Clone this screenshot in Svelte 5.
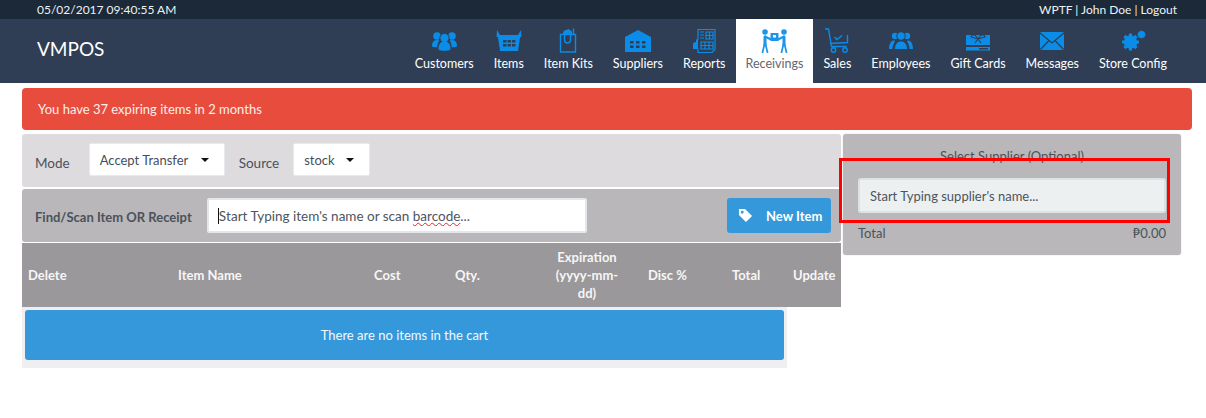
<script>
  const ICONS = {
    customers: `<circle cx="7" cy="9" r="3.8"/><circle cx="22" cy="9" r="3.8"/><path d="M2 19c0-4 2-6 5-6 1 0 2 .3 2.6.8-1.600 1.500-2.300 3.500-2.300 6.400C4.500 20.500 2 20 2 19zM27 19c0-4-2-6-5-6-1 0-2 .3-2.600.8 1.600 1.500 2.300 3.500 2.300 6.400 2.800.3 5.300-.2 5.300-1.200z"/><circle cx="14.500" cy="11" r="4.600" stroke="#2f3e54"/><path d="M8.500 22c0-5 2-7.500 6-7.500s6 2.500 6 7.500c0 2.500-12 2.500-12 0z"/>`,
    items: `<path fill-rule="evenodd" d="M2 3l3 5h18l3-5 .5 6.500-1.500 1L23 24H5L3 10.500 1.500 9.500zM8 13v2.500h3.500V13zM12.500 13v2.500H16V13zM17 13v2.500h3.500V13zM8 17v2.500h3.500V17zM12.500 17v2.500H16V17zM17 17v2.500h3.500V17z"/>`,
    kits: `<g fill="none" stroke="currentColor" stroke-width="1.400"><path d="M6.500 7.500h15V25h-15z"/><path d="M10.500 8v5c0 4 6 4 6 0V8"/><path d="M19.500 7V1.500"/></g><path d="M9 7c0-3 2-4.500 3.500-4 1-1 3-1 4 .5 1.500 0 2 2 1.500 3.500z"/>`,
    suppliers: `<path fill-rule="evenodd" d="M1 10L14 3l13 7v15H1zM6 14v2.500h3.500V14zM12 14v2.500h3.500V14zM18 14v2.500h3.500V14zM6 18.500V21h3.500v-2.500zM12 18.500V21h3.500v-2.500zM18 18.500V21h3.500v-2.500z"/><rect x="1" y="23.500" width="26" height="1.500"/>`,
    reports: `<g fill="none" stroke="currentColor" stroke-width="1.200"><path d="M8 13V2.500h17v20l-3 3H8v-4"/><path d="M16 5h7v7h-7zM19.500 5v7M16 8.500h7M10 5h4M10 8h4M10 11h4"/><path d="M11 15h12v7H11zM11 18.500h12M15 15v7M19 15v7"/></g><path d="M3 16l3-1v-3l2 1v9H3z"/>`,
    receivings: `<circle cx="5" cy="5" r="2.800"/><circle cx="24" cy="5" r="2.800"/><rect x="10.500" y="6" width="8" height="8" rx=".5"/><rect x="13" y="8" width="3" height="2.500" fill="#fff"/><g fill="none" stroke="currentColor" stroke-linecap="round"><path stroke-width="3" d="M5 10v8M24 10v8"/><path stroke-width="2" d="M5 9.500l6 3M24 9.500l-6 3"/><path stroke-width="1.700" d="M4.500 17L2.500 25.500M5.500 17l2 8.500M23.500 17l-2 8.500M24.500 17l2 8.500"/></g>`,
    sales: `<g fill="none" stroke="currentColor" stroke-width="1.400"><path d="M2 2h3.500l3 17.500h15"/><path d="M6.500 7.500M7 16.500l17.500-1V8"/><circle cx="10.500" cy="23" r="2.200"/><circle cx="22" cy="23" r="2.200"/><path d="M11.500 10l2.500 2.500 5-4" stroke-width="1.600"/></g>`,
    employees: `<circle cx="8" cy="9" r="3.200"/><circle cx="20" cy="9" r="3.200"/><circle cx="14" cy="9" r="4.200" stroke="#2f3e54"/><path d="M2 22c0-5 2-8 4.500-8.500 2-.4 1.500.5.800 2C6 18 5.500 20 5.500 22zM26 22c0-5-2-8-4.500-8.500-2-.4-1.500.5-.8 2C22 18 22.500 20 22.500 22z"/><path d="M8 22c0-5 2.500-7.500 6-7.500s6 2.500 6 7.500z"/>`,
    giftcards: `<path d="M2 8h24v10H2z"/><rect x="2" y="20" width="24" height="3.500"/><rect x="15" y="21" width="9" height="1.500" fill="#2f3e54"/><g fill="none" stroke="#2f3e54" stroke-width="1.100"><path d="M14 12l-3-4h-3l-1 2 7 2 7-2-1-2h-3zM14 12l-3 4M14 12l3 4"/></g>`,
    messages: `<rect x="2" y="5" width="24" height="18" rx="1.500"/><path fill="none" stroke="#2f3e54" stroke-width="1.200" d="M2 6l12 10L26 6M2.500 22.500l8.500-9M25.500 22.500l-8.500-9"/>`,
    config: `<g transform="translate(11.500 15)"><circle r="5" fill="none" stroke="currentColor" stroke-width="3.400"/><path stroke="currentColor" stroke-width="3.200" d="M0-8.500V8.500M-8.500 0H8.500M-6-6L6 6M6-6L-6 6"/></g><circle cx="22.500" cy="7.500" r="2.700" fill="none" stroke="currentColor" stroke-width="1.800"/><path stroke="currentColor" stroke-width="1.300" d="M22.500 3.500v8M18.500 7.500h8M19.700 4.700l5.600 5.600M25.300 4.700l-5.600 5.600"/>`,
  };

  const nav = [
    { label: 'Customers', icon: 'customers' },
    { label: 'Items', icon: 'items' },
    { label: 'Item Kits', icon: 'kits' },
    { label: 'Suppliers', icon: 'suppliers' },
    { label: 'Reports', icon: 'reports' },
    { label: 'Receivings', icon: 'receivings', active: true },
    { label: 'Sales', icon: 'sales' },
    { label: 'Employees', icon: 'employees' },
    { label: 'Gift Cards', icon: 'giftcards' },
    { label: 'Messages', icon: 'messages' },
    { label: 'Store Config', icon: 'config' },
  ];

  const columns = ['Delete', 'Item Name', 'Cost', 'Qty.', 'Expiration (yyyy-mm-dd)', 'Disc %', 'Total', 'Update'];
</script>

<div class="topbar">
  <span>05/02/2017 09:40:55 AM</span>
  <span>WPTF | John Doe | Logout</span>
</div>

<header class="header">
  <div class="brand">VMPOS</div>
  <nav class="nav">
    {#each nav as item}
      <a class="nav-item" class:active={item.active} href="#top">
        <svg class="nav-icon" viewBox="0 0 28 26" width="28" height="26" fill="currentColor">{@html ICONS[item.icon]}</svg>
        <span>{item.label}</span>
      </a>
    {/each}
  </nav>
</header>

<main class="page">
  <div class="alert-danger">You have 37 expiring items in 2 months</div>

  <div class="columns">
    <section class="left">
      <div class="panel mode-panel">
        <span class="label">Mode</span>
        <div class="select mode-select">Accept Transfer <i class="caret"></i></div>
        <span class="label source-label">Source</span>
        <div class="select source-select">stock <i class="caret"></i></div>
      </div>

      <div class="panel search-panel">
        <span class="label strong">Find/Scan Item OR Receipt</span>
        <div class="search-input"><span class="cursor">S</span>tart Typing item's name or scan <span class="typo">barcode</span>...</div>
        <button class="new-item">
          <svg viewBox="0 0 16 16" width="15" height="15" fill="#fff"><path fill-rule="evenodd" d="M1 1h6.500L15 8.500 8.500 15 1 7.500zM4.500 3a1.500 1.500 0 1 0 0 3 1.500 1.500 0 0 0 0-3z"/></svg>
          <span>New Item</span>
        </button>
      </div>

      <table class="cart">
        <thead>
          <tr>
            {#each columns as col}
              <th>{col}</th>
            {/each}
          </tr>
        </thead>
      </table>

      <div class="cart-body">
        <div class="empty">There are no items in the cart</div>
      </div>
    </section>

    <aside class="supplier">
      <div class="supplier-title">Select Supplier (Optional)</div>
      <input class="supplier-input" placeholder="Start Typing supplier's name..." />
      <div class="total"><span>Total</span><span>₱0.00</span></div>
      <div class="highlight"></div>
    </aside>
  </div>
</main>

<style>
  :global(body) {
    margin: 0;
    background: #fff;
    font-family: Lato, "Open Sans", sans-serif;
    font-size: 13px;
    color: #454f59;
  }

  .topbar {
    height: 19px;
    padding: 0 29px 0 37px;
    display: flex;
    justify-content: space-between;
    align-items: center;
    background: #1b2939;
    color: #eef1f3;
    font-size: 12px;
    line-height: 15px;
  }

  .header {
    height: 64px;
    padding: 0 29px 0 37px;
    display: flex;
    justify-content: space-between;
    background: #2f3e54;
    color: #fff;
  }

  .brand {
    font-size: 19px;
    line-height: 60px;
  }

  .nav {
    display: flex;
  }

  .nav-item {
    padding: 8px 10px 0;
    display: flex;
    flex-direction: column;
    align-items: center;
    color: #fff;
    font-size: 12.5px;
    line-height: 16px;
    text-decoration: none;
  }

  .nav-icon {
    margin-bottom: 3px;
    color: #0b8ce6;
  }

  .nav-item.active {
    background: #fff;
    color: #5f6770;
  }

  .nav-item.active .nav-icon {
    color: #1b96ec;
  }

  .page {
    padding: 5px 14px 0 22px;
  }

  .alert-danger {
    height: 42px;
    padding: 0 16px;
    display: flex;
    align-items: center;
    border-radius: 4px;
    background: #e74c3c;
    color: #fbeeec;
  }

  .columns {
    margin-top: 4px;
    display: flex;
    align-items: flex-start;
    gap: 2px;
  }

  .left {
    width: 819px;
  }

  .panel {
    height: 53px;
    box-sizing: border-box;
    display: flex;
    align-items: center;
    border-radius: 3px;
  }

  .mode-panel {
    padding-left: 13px;
    background: #dddbde;
  }

  .search-panel {
    margin-top: 2px;
    padding-left: 13px;
    background: #b9b7b9;
  }

  .label {
    padding-top: 5px;
    font-size: 13.500px;
    color: #4a525b;
  }

  .label.strong {
    padding-top: 3px;
    font-weight: 700;
    font-size: 13px;
  }

  .select {
    height: 33px;
    box-sizing: border-box;
    padding-left: 10px;
    display: flex;
    align-items: center;
    border: 1px solid #e6e9ee;
    border-radius: 2px;
    background: #fff;
    color: #454f59;
    position: relative;
    top: -1px;
  }

  .mode-select {
    width: 136px;
    margin-left: 19px;
  }

  .source-select {
    width: 77px;
    margin-left: 14px;
  }

  .source-label {
    margin-left: 14px;
  }

  .caret {
    margin-left: auto;
    margin-right: 15px;
    border: 4px solid transparent;
    border-top-color: #111;
    border-bottom-width: 0;
  }

  .search-input {
    width: 380px;
    height: 35px;
    box-sizing: border-box;
    margin-left: 15px;
    padding-left: 9px;
    display: flex;
    align-items: center;
    white-space: pre;
    border: 2px solid #e3e6ea;
    border-radius: 2px;
    background: #fff;
    color: #4d555d;
    font-size: 13.500px;
  }

  .cursor {
    border-left: 1px solid #111;
  }

  .typo {
    text-decoration: underline wavy #e22;
    text-decoration-thickness: 1px;
  }

  .new-item {
    width: 104px;
    height: 35px;
    margin-left: auto;
    margin-right: 10px;
    padding: 0 0 0 11px;
    display: flex;
    align-items: center;
    gap: 13px;
    border: 0;
    border-radius: 3px;
    background: #3498db;
    color: #fff;
    font: 700 13px Lato, sans-serif;
  }

  .cart {
    width: 100%;
    margin-top: 1px;
    table-layout: fixed;
    border-collapse: collapse;
    background: #9a989a;
    color: #f6f6f6;
  }

  .cart th {
    height: 64px;
    box-sizing: border-box;
    padding: 0 0 0 6px;
    text-align: left;
    font-weight: 700;
    font-size: 13px;
    line-height: 18px;
  }

  .cart th:nth-child(1) { width: 150px; }
  .cart th:nth-child(2) { width: 196px; }
  .cart th:nth-child(3) { width: 81px; }
  .cart th:nth-child(4) { width: 94px; }
  .cart th:nth-child(5) { width: 99px; padding-right: 17px; text-align: center; }
  .cart th:nth-child(6) { width: 84px; }
  .cart th:nth-child(7) { width: 61px; }

  .cart-body {
    width: 765px;
    box-sizing: border-box;
    padding: 3px 3px 8px;
    background: #efeef0;
  }

  .empty {
    height: 50px;
    display: flex;
    align-items: center;
    justify-content: center;
    border-radius: 3px;
    background: #3498db;
    color: #f4f8fb;
  }

  .supplier {
    width: 338px;
    height: 121px;
    box-sizing: border-box;
    padding: 15px 15px 0;
    position: relative;
    border-radius: 3px;
    background: #b9b7b9;
    box-shadow: 0 0 2px #ddd;
  }

  .supplier-title {
    text-align: center;
    line-height: 15px;
    color: #4a525b;
  }

  .supplier-input {
    width: 308px;
    height: 35px;
    box-sizing: border-box;
    margin-top: 14px;
    padding: 0 10px;
    display: block;
    border: 2px solid #dde2e6;
    border-radius: 3px;
    background: #ecf0f1;
    font: 13px Lato, sans-serif;
  }

  .supplier-input::placeholder {
    color: #4d555d;
    opacity: 1;
  }

  .total {
    margin-top: 12px;
    display: flex;
    justify-content: space-between;
    color: #4a525b;
  }

  .highlight {
    position: absolute;
    left: -4px;
    top: 24px;
    width: 331px;
    height: 65px;
    box-sizing: border-box;
    border: 3px solid #f00;
  }
</style>
